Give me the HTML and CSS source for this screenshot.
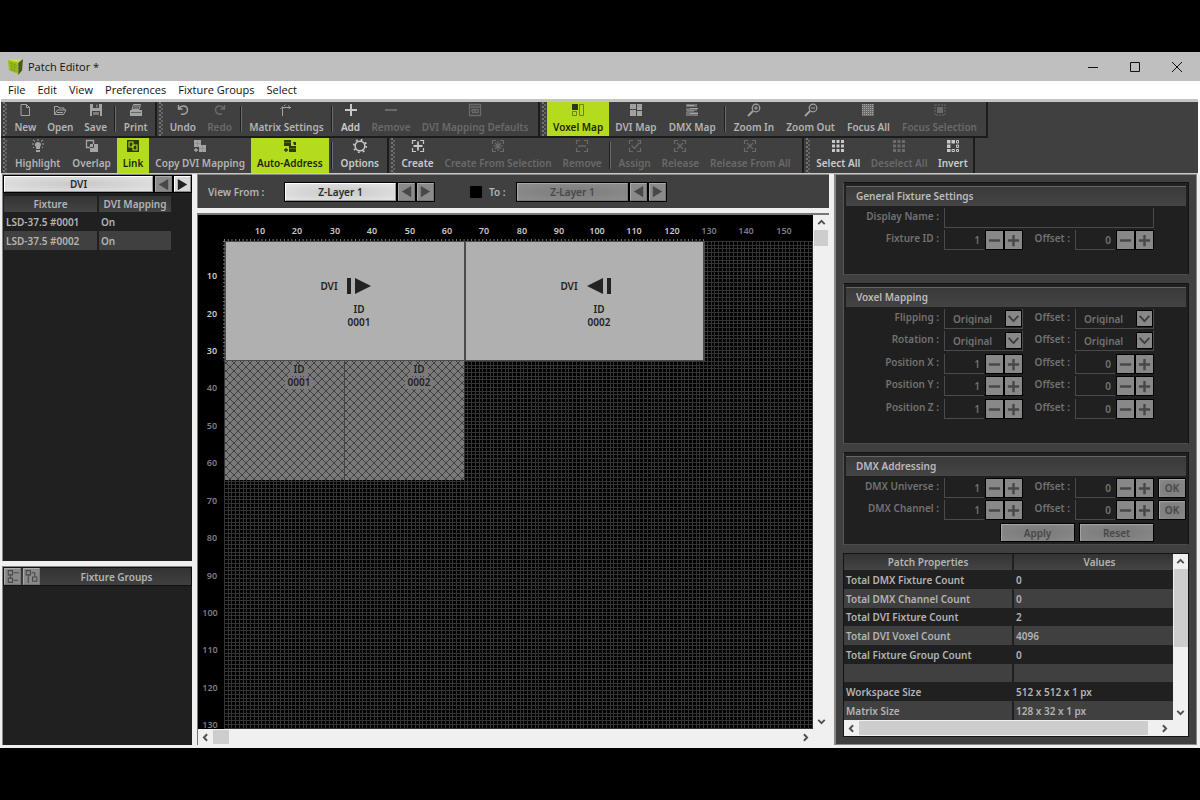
FILE: index.html
```html
<!DOCTYPE html>
<html lang="en">
<head>
<meta charset="utf-8">
<title>Patch Editor</title>
<link rel="stylesheet" href="styles.css">
</head>
<body>
<svg class="defs" aria-hidden="true">
  <defs>
    <symbol id="i-new" viewBox="0 0 14 14"><path d="M3 1.5h5.5l3 3v8H3z M8.5 1.5v3h3" fill="none" stroke="currentColor"/></symbol>
    <symbol id="i-open" viewBox="0 0 14 14"><path d="M1.5 11.5v-8h3.5l1 1.5h5v2M1.5 11.5l3-4.5h8.500l-2.500 4.500z M4 9.500h6" fill="none" stroke="currentColor"/></symbol>
    <symbol id="i-save" viewBox="0 0 14 14"><path d="M1 1h12v12H1z M4 1v4h6V1z M3 8v5h8V8z" fill="currentColor" fill-rule="evenodd"/><path d="M7 1.500h1.500v3H7z M4 9h6v3H4z" fill="currentColor" opacity=".6"/></symbol>
    <symbol id="i-print" viewBox="0 0 14 14"><path d="M4.500 1.500h7l-1.500 5H3z" fill="none" stroke="currentColor"/><path d="M5 3h5M4.500 5h5" stroke="currentColor"/><path d="M1 7h12v6H1z" fill="currentColor"/><path d="M2 9.500h10" stroke="#666"/></symbol>
    <symbol id="i-undo" viewBox="0 0 14 14"><path d="M2.500 2v4h4M3 5.500C5 2 11 2 11.500 6.500C12 10 8.500 12 5 11" fill="none" stroke="currentColor" stroke-width="1.400"/></symbol>
    <symbol id="i-redo" viewBox="0 0 14 14"><path d="M11.500 2v4h-4M11 5.500C9 2 3 2 2.500 6.500C2 10 5.500 12 9 11" fill="none" stroke="currentColor" stroke-width="1.400"/></symbol>
    <symbol id="i-matrix" viewBox="0 0 14 14"><path d="M3.500 13V4.500H12" fill="none" stroke="currentColor"/><path d="M1.500 6l2-2.500 2 2.500M9 2.500l2.500 2-2.500 2M5 3l2-2" fill="none" stroke="currentColor" stroke-dasharray="2 1"/></symbol>
    <symbol id="i-add" viewBox="0 0 14 14"><path d="M7 1v12M1 7h12" stroke="currentColor" stroke-width="2"/></symbol>
    <symbol id="i-remove" viewBox="0 0 14 14"><path d="M1 7h12" stroke="currentColor" stroke-width="2"/></symbol>
    <symbol id="i-defaults" viewBox="0 0 14 14"><path d="M1.500 1.500h11v11h-11z M1.500 4h11M4 9.500h6v-3h-6V9M4 8l2-2M7 6.500v3" fill="none" stroke="currentColor" stroke-width="1.300"/></symbol>
    <symbol id="i-voxel" viewBox="0 0 14 14"><path d="M1 1h6v6H1z" fill="currentColor"/><path d="M8.500 1.500h4v11h-4z M1.500 8.500h4v4h-4z" fill="none" stroke="#6c8412"/></symbol>
    <symbol id="i-dvi" viewBox="0 0 14 14"><path d="M1 1h6v5H1z M1 7h6v6H1z M8 1h5v6H8z M8 8h5v5H8z" fill="currentColor"/><path d="M4 1v12M8 3h5" stroke="#8a8a8a" stroke-width=".6"/></symbol>
    <symbol id="i-dmx" viewBox="0 0 14 14"><path d="M1 1h11v3H1z M1 5h11v3H1z M1 9h12v4H1z" fill="currentColor" opacity=".5"/><path d="M2 2.500h7M5 5.500h8M2 8h7M5 10.500h8" stroke="currentColor"/></symbol>
    <symbol id="i-zoomin" viewBox="0 0 14 14"><circle cx="9" cy="5" r="3.800" fill="none" stroke="currentColor" stroke-width="1.200"/><path d="M9 3v4M7 5h4" stroke="currentColor"/><path d="M6 8l-5 5" stroke="currentColor" stroke-width="1.800"/></symbol>
    <symbol id="i-zoomout" viewBox="0 0 14 14"><circle cx="9" cy="5" r="3.800" fill="none" stroke="currentColor" stroke-width="1.200"/><path d="M7 5h4" stroke="currentColor"/><path d="M6 8l-5 5" stroke="currentColor" stroke-width="1.800"/></symbol>
    <symbol id="i-focusall" viewBox="0 0 14 14"><path d="M1 1h12v12H1z" fill="currentColor" opacity=".45"/><path d="M1.500 1v12M3.500 1v12M5.500 1v12M7.500 1v12M9.500 1v12M11.500 1v12" stroke="currentColor" stroke-dasharray="1 1"/></symbol>
    <symbol id="i-focussel" viewBox="0 0 14 14"><path d="M4 4h6v6H4z" fill="currentColor"/><path d="M2 2h10v10H2z" fill="none" stroke="currentColor" stroke-dasharray="2 1"/></symbol>
    <symbol id="i-highlight" viewBox="0 0 14 14"><path d="M5 10V8C3 6 4 3 7 3s4 3 2 5v2z M5 11h4v2H5z" fill="currentColor"/><path d="M7 0v2M1 5h2M11 5h2M2 1l2 1.500M12 1l-2 1.500M2 9l1-1M12 9l-1-1" stroke="currentColor"/></symbol>
    <symbol id="i-overlap" viewBox="0 0 14 14"><path d="M1.500 1.500h7v7h-7z" fill="none" stroke="currentColor" stroke-width="1.300"/><path d="M5 5h8v8H5z" fill="currentColor"/><path d="M5 8.500h3.500V5" fill="none" stroke="#444"/></symbol>
    <symbol id="i-link" viewBox="0 0 14 14"><path d="M1 1h12v12H1z" fill="currentColor"/><path d="M3 3h4v5H3z M7 6h4v5H7z M5 8l4-2" fill="none" stroke="#b4dc1e" stroke-width="1.100"/></symbol>
    <symbol id="i-copy" viewBox="0 0 14 14"><path d="M1 1h7v7H1z M6 6h7v7H6z" fill="currentColor"/><path d="M1 4.500h7M4.500 1v6M6 9.500h7M9.500 6v7" stroke="#888" stroke-width=".6"/><path d="M3 9v4M1 11h4" stroke="currentColor" stroke-width="1.300"/></symbol>
    <symbol id="i-auto" viewBox="0 0 14 14"><path d="M1 1h7v6H1z M6 7h7v6H6z M10 3h3v3h-2z" fill="currentColor"/><path d="M1 3.500h7M6 9.500h7" stroke="#6c8412" stroke-width=".7"/><path d="M3 9v4M1 11h4" stroke="currentColor" stroke-width="1.300"/></symbol>
    <symbol id="i-options" viewBox="0 0 14 14"><circle cx="7" cy="7" r="4.800" fill="none" stroke="currentColor" stroke-width="1.500"/><circle cx="7" cy="7" r="6.300" fill="none" stroke="currentColor" stroke-width="1.800" stroke-dasharray="1.800 3.150"/></symbol>
    <symbol id="i-corners" viewBox="0 0 14 14"><path d="M1.500 5V1.500H5M9 1.500h3.500V5M12.500 9v3.500H9M5 12.500H1.500V9" fill="none" stroke="currentColor" stroke-width="1.200"/></symbol>
    <symbol id="i-create" viewBox="0 0 14 14"><use href="#i-corners"/><path d="M7 2.500v9M2.500 7h9" stroke="currentColor" stroke-width="1.800"/></symbol>
    <symbol id="i-createsel" viewBox="0 0 14 14"><use href="#i-corners"/><path d="M7 2v10M2 7h10M4 4l6 6M10 4l-6 6" stroke="currentColor" stroke-width="1.200"/></symbol>
    <symbol id="i-removesel" viewBox="0 0 14 14"><use href="#i-corners"/><path d="M3 7h8" stroke="currentColor" stroke-width="1.400"/></symbol>
    <symbol id="i-assign" viewBox="0 0 14 14"><use href="#i-corners"/><path d="M3.500 6.500l3 3 5-6" fill="none" stroke="currentColor" stroke-width="1.300"/></symbol>
    <symbol id="i-release" viewBox="0 0 14 14"><use href="#i-corners"/><path d="M4 4l6 6M10 4l-6 6" stroke="currentColor" stroke-width="1.200"/></symbol>
    <symbol id="i-selall" viewBox="0 0 14 14"><path d="M1 1h3v3H1zM5.500 1h3v3h-3zM10 1h3v3h-3zM1 5.500h3v3H1zM5.500 5.500h3v3h-3zM10 5.500h3v3h-3zM1 10h3v3H1zM5.500 10h3v3h-3zM10 10h3v3h-3z" fill="currentColor"/></symbol>
    <symbol id="i-invert" viewBox="0 0 14 14"><path d="M1 1h3.500v3.500H1zM5.500 1H9v3.500H5.500zM1 5.500h3.500V9H1zM1 10h3.500v3H1z" fill="currentColor"/><path d="M10.500 1.500h2v2.500h-2zM10.500 6h2v2.500h-2zM6 10.500h2.500v2H6zM10.500 10.500h2v2h-2z" fill="none" stroke="currentColor"/></symbol>
    <symbol id="s-prev" viewBox="0 0 16 16"><path d="M13 2v12L3 8z" fill="currentColor"/></symbol>
    <symbol id="s-next" viewBox="0 0 16 16"><path d="M3 2v12l10-6z" fill="currentColor"/></symbol>
    <symbol id="s-minus" viewBox="0 0 16 16"><path d="M2 8h12" stroke="currentColor" stroke-width="2.600"/></symbol>
    <symbol id="s-plus" viewBox="0 0 16 16"><path d="M2 8h12M8 2v12" stroke="currentColor" stroke-width="2.600"/></symbol>
    <symbol id="s-check" viewBox="0 0 14 14"><path d="M2.500 4.500l4.500 5 4.500-5" fill="none" stroke="currentColor" stroke-width="1.800"/></symbol>
    <symbol id="c-up" viewBox="0 0 14 14"><path d="M4 8.500L7 5.500l3 3" fill="none" stroke="#505050" stroke-width="1.800"/></symbol>
    <symbol id="c-down" viewBox="0 0 14 14"><path d="M4 5.500l3 3 3-3" fill="none" stroke="#505050" stroke-width="1.800"/></symbol>
    <symbol id="c-left" viewBox="0 0 14 14"><path d="M8.500 4l-3 3 3 3" fill="none" stroke="#505050" stroke-width="1.800"/></symbol>
    <symbol id="c-right" viewBox="0 0 14 14"><path d="M5.500 4l3 3-3 3" fill="none" stroke="#505050" stroke-width="1.800"/></symbol>
    <pattern id="hatch" width="8" height="8" patternUnits="userSpaceOnUse"><path d="M-1 -1l10 10M9 -1l-10 10" stroke="#3a3a3a" stroke-width=".9"/></pattern>
  </defs>
</svg>

<div class="window">
  <header class="titlebar">
    <svg class="app-icon" viewBox="0 0 16 18" aria-hidden="true"><path d="M0 2l6-1 10 0-5 4z" fill="#c4dc50"/><path d="M0 2l11 3v12L1 13z" fill="#9cc01c"/><path d="M11 5l5-4-1 12-4 5z" fill="#4c5c10"/><path d="M1 5l9 3M1.500 8l8.500 3M1.500 11l8.500 3M4 4v10M7 5v10" stroke="#7a9614" stroke-width=".6"/></svg>
    <span class="app-title">Patch Editor *</span>
    <button class="win-btn" aria-label="Minimize"><svg viewBox="0 0 12 12"><path d="M1 6.500h10" stroke="#111"/></svg></button>
    <button class="win-btn" aria-label="Maximize"><svg viewBox="0 0 12 12"><path d="M1.500 1.500h9v9h-9z" fill="none" stroke="#111"/></svg></button>
    <button class="win-btn" aria-label="Close"><svg viewBox="0 0 12 12"><path d="M1 1l10 10M11 1L1 11" stroke="#111"/></svg></button>
  </header>
  <nav class="menubar">
    <button>File</button><button>Edit</button><button>View</button><button>Preferences</button><button>Fixture Groups</button><button>Select</button>
  </nav>

  <div class="toolbars">
    <div class="toolrow">
      <div class="tools t-file">
        <button class="tool"><svg><use href="#i-new"/></svg>New</button>
        <button class="tool"><svg><use href="#i-open"/></svg>Open</button>
        <button class="tool"><svg><use href="#i-save"/></svg>Save</button>
        <i class="sep"></i>
        <button class="tool"><svg><use href="#i-print"/></svg>Print</button>
      </div>
      <div class="tools t-edit">
        <button class="tool"><svg><use href="#i-undo"/></svg>Undo</button>
        <button class="tool" disabled><svg><use href="#i-redo"/></svg>Redo</button>
        <i class="sep"></i>
        <button class="tool"><svg><use href="#i-matrix"/></svg>Matrix Settings</button>
        <i class="sep"></i>
        <button class="tool bright"><svg><use href="#i-add"/></svg>Add</button>
        <button class="tool" disabled><svg><use href="#i-remove"/></svg>Remove</button>
        <button class="tool" disabled><svg><use href="#i-defaults"/></svg>DVI Mapping Defaults</button>
      </div>
      <div class="tools t-view">
        <button class="tool on"><svg><use href="#i-voxel"/></svg>Voxel Map</button>
        <button class="tool"><svg><use href="#i-dvi"/></svg>DVI Map</button>
        <button class="tool"><svg><use href="#i-dmx"/></svg>DMX Map</button>
        <i class="sep"></i>
        <button class="tool"><svg><use href="#i-zoomin"/></svg>Zoom In</button>
        <button class="tool"><svg><use href="#i-zoomout"/></svg>Zoom Out</button>
        <button class="tool"><svg><use href="#i-focusall"/></svg>Focus All</button>
        <button class="tool" disabled><svg><use href="#i-focussel"/></svg>Focus Selection</button>
      </div>
    </div>
    <div class="toolrow">
      <div class="tools t-map">
        <button class="tool"><svg><use href="#i-highlight"/></svg>Highlight</button>
        <button class="tool"><svg><use href="#i-overlap"/></svg>Overlap</button>
        <button class="tool on"><svg><use href="#i-link"/></svg>Link</button>
        <button class="tool"><svg><use href="#i-copy"/></svg>Copy DVI Mapping</button>
        <button class="tool on"><svg><use href="#i-auto"/></svg>Auto-Address</button>
        <i class="sep"></i>
        <button class="tool bright"><svg><use href="#i-options"/></svg>Options</button>
      </div>
      <div class="tools t-group">
        <button class="tool bright"><svg><use href="#i-create"/></svg>Create</button>
        <button class="tool" disabled><svg><use href="#i-createsel"/></svg>Create From Selection</button>
        <button class="tool" disabled><svg><use href="#i-removesel"/></svg>Remove</button>
        <i class="sep"></i>
        <button class="tool" disabled><svg><use href="#i-assign"/></svg>Assign</button>
        <button class="tool" disabled><svg><use href="#i-release"/></svg>Release</button>
        <button class="tool" disabled><svg><use href="#i-release"/></svg>Release From All</button>
      </div>
      <div class="tools t-select">
        <button class="tool bright"><svg><use href="#i-selall"/></svg>Select All</button>
        <button class="tool" disabled><svg><use href="#i-selall"/></svg>Deselect All</button>
        <button class="tool bright"><svg><use href="#i-invert"/></svg>Invert</button>
      </div>
    </div>
  </div>

  <main class="workarea">
    <aside class="left">
      <section class="panel fixtures">
        <div class="stepper">
          <button class="face">DVI</button>
          <button class="step dim" aria-label="Previous type"><svg><use href="#s-prev"/></svg></button>
          <button class="step lit" aria-label="Next type"><svg><use href="#s-next"/></svg></button>
        </div>
        <table class="grid fixture-table">
          <thead><tr><th class="c-fix">Fixture</th><th>DVI Mapping</th></tr></thead>
          <tbody><tr><td>LSD-37.5 #0001</td><td>On</td></tr><tr><td>LSD-37.5 #0002</td><td>On</td></tr></tbody>
        </table>
      </section>
      <section class="panel groups">
        <div class="group-head">
          <button class="step dim" aria-label="Expand all"><svg viewBox="0 0 14 14"><path d="M3 1.500h4v4H3zM3 8.500h4v4H3zM8 3.500h5M8 10.500h4M5 6v2" fill="none" stroke="currentColor"/></svg></button>
          <button class="step dim" aria-label="Collapse all"><svg viewBox="0 0 14 14"><path d="M2 1.500h4v4H2zM8 7.500h4v4H8zM4 6v7M7 3.500h3v4" fill="none" stroke="currentColor"/></svg></button>
          <h2>Fixture Groups</h2>
        </div>
      </section>
    </aside>

    <div class="center">
      <div class="viewbar">
        <span class="lbl">View From :</span>
        <div class="stepper">
          <button class="face">Z-Layer 1</button>
          <button class="step dim" aria-label="Previous layer"><svg><use href="#s-prev"/></svg></button>
          <button class="step dim" aria-label="Next layer"><svg><use href="#s-next"/></svg></button>
        </div>
        <label class="to"><input type="checkbox">To :</label>
        <div class="stepper off">
          <button class="face">Z-Layer 1</button>
          <button class="step dim" aria-label="Previous end layer"><svg><use href="#s-prev"/></svg></button>
          <button class="step dim" aria-label="Next end layer"><svg><use href="#s-next"/></svg></button>
        </div>
      </div>
      <div class="canvas-wrap">
        <svg class="canvas" role="img" aria-label="Voxel map">
          <g class="lines">
            <path d="M26 1026H3026" stroke-width="2000" stroke-dasharray="1 2.743"/>
            <path d="M1526 26V3026" stroke-width="3000" stroke-dasharray="1 2.743"/>
          </g>
          <path d="M26 25H506" stroke="#777" stroke-width="2" stroke-dasharray="1 2.743"/>
          <path d="M26 26V146" stroke="#777" stroke-width="2" stroke-dasharray="1 2.743"/>
          <g class="ruler hot">
            <text x="62" y="19">10</text><text x="99" y="19">20</text><text x="137" y="19">30</text><text x="174" y="19">40</text><text x="212" y="19">50</text><text x="249" y="19">60</text><text x="286" y="19">70</text><text x="324" y="19">80</text><text x="361" y="19">90</text><text x="399" y="19">100</text><text x="436" y="19">110</text><text x="474" y="19">120</text>
            <text x="14" y="64">10</text><text x="14" y="102">20</text><text x="14" y="139">30</text>
          </g>
          <g class="ruler">
            <text x="511" y="19">130</text><text x="548" y="19">140</text><text x="586" y="19">150</text>
            <text x="14" y="176">40</text><text x="14" y="214">50</text><text x="14" y="251">60</text><text x="14" y="289">70</text><text x="14" y="326">80</text><text x="14" y="364">90</text><text x="12" y="401">100</text><text x="12" y="438">110</text><text x="12" y="476">120</text><text x="12" y="513">130</text>
          </g>
          <rect x="27" y="26" width="480" height="120" fill="#4c4c4c"/>
          <rect x="28" y="27" width="238" height="118" fill="#b0b0b0"/>
          <rect x="268" y="27" width="237" height="118" fill="#b0b0b0"/>
          <rect x="27" y="146" width="239" height="119" fill="#7a7a7a"/>
          <rect x="27" y="146" width="239" height="119" fill="url(#hatch)"/>
          <rect x="146" y="146" width="1" height="119" fill="#444"/>
          <path d="M149 63h4v16h-4zM157 63v16l16-8z M409 63h4v16h-4zM405 63v16l-16-8z" fill="#222"/>
          <g class="chips">
            <rect x="92" y="150" width="18" height="11" rx="3"/><rect x="87" y="162" width="28" height="12" rx="3"/>
            <rect x="212" y="150" width="18" height="11" rx="3"/><rect x="207" y="162" width="28" height="12" rx="3"/>
          </g>
          <g class="marks">
            <text x="131" y="75">DVI</text><text x="161" y="98">ID</text><text x="161" y="111">0001</text>
            <text x="371" y="75">DVI</text><text x="401" y="98">ID</text><text x="401" y="111">0002</text>
            <text x="101" y="158">ID</text><text x="101" y="171">0001</text>
            <text x="221" y="158">ID</text><text x="221" y="171">0002</text>
          </g>
        </svg>
        <div class="vbar"><svg><use href="#c-up"/></svg><i class="thumb short"></i><b></b><svg><use href="#c-down"/></svg></div>
        <div class="hbar"><svg><use href="#c-left"/></svg><i class="thumb short"></i><b></b><svg><use href="#c-right"/></svg></div>
      </div>
    </div>

    <aside class="right">
      <section class="group g-general">
        <h2>General Fixture Settings</h2>
        <div class="form">
          <label class="name" for="dn">Display Name :</label><input class="wide" id="dn" type="text">
          <label class="name" for="fid">Fixture ID :</label><span class="spin"><input id="fid" value="1"><button aria-label="Decrease"><svg><use href="#s-minus"/></svg></button><button aria-label="Increase"><svg><use href="#s-plus"/></svg></button></span>
          <label for="fido">Offset :</label><span class="spin"><input id="fido" value="0"><button aria-label="Decrease"><svg><use href="#s-minus"/></svg></button><button aria-label="Increase"><svg><use href="#s-plus"/></svg></button></span>
        </div>
      </section>
      <section class="group g-voxel">
        <h2>Voxel Mapping</h2>
        <div class="form">
          <label class="name" for="fl">Flipping :</label><span class="combo"><select id="fl"><option>Original</option></select><svg><use href="#s-check"/></svg></span>
          <label for="flo">Offset :</label><span class="combo"><select id="flo"><option>Original</option></select><svg><use href="#s-check"/></svg></span>
          <label class="name" for="ro">Rotation :</label><span class="combo"><select id="ro"><option>Original</option></select><svg><use href="#s-check"/></svg></span>
          <label for="roo">Offset :</label><span class="combo"><select id="roo"><option>Original</option></select><svg><use href="#s-check"/></svg></span>
          <label class="name" for="px">Position X :</label><span class="spin"><input id="px" value="1"><button aria-label="Decrease"><svg><use href="#s-minus"/></svg></button><button aria-label="Increase"><svg><use href="#s-plus"/></svg></button></span>
          <label for="pxo">Offset :</label><span class="spin"><input id="pxo" value="0"><button aria-label="Decrease"><svg><use href="#s-minus"/></svg></button><button aria-label="Increase"><svg><use href="#s-plus"/></svg></button></span>
          <label class="name" for="py">Position Y :</label><span class="spin"><input id="py" value="1"><button aria-label="Decrease"><svg><use href="#s-minus"/></svg></button><button aria-label="Increase"><svg><use href="#s-plus"/></svg></button></span>
          <label for="pyo">Offset :</label><span class="spin"><input id="pyo" value="0"><button aria-label="Decrease"><svg><use href="#s-minus"/></svg></button><button aria-label="Increase"><svg><use href="#s-plus"/></svg></button></span>
          <label class="name" for="pz">Position Z :</label><span class="spin"><input id="pz" value="1"><button aria-label="Decrease"><svg><use href="#s-minus"/></svg></button><button aria-label="Increase"><svg><use href="#s-plus"/></svg></button></span>
          <label for="pzo">Offset :</label><span class="spin"><input id="pzo" value="0"><button aria-label="Decrease"><svg><use href="#s-minus"/></svg></button><button aria-label="Increase"><svg><use href="#s-plus"/></svg></button></span>
        </div>
      </section>
      <section class="group g-dmx">
        <h2>DMX Addressing</h2>
        <div class="form">
          <label class="name" for="du">DMX Universe :</label><span class="spin"><input id="du" value="1"><button aria-label="Decrease"><svg><use href="#s-minus"/></svg></button><button aria-label="Increase"><svg><use href="#s-plus"/></svg></button></span>
          <label for="duo">Offset :</label><span class="spin"><input id="duo" value="0"><button aria-label="Decrease"><svg><use href="#s-minus"/></svg></button><button aria-label="Increase"><svg><use href="#s-plus"/></svg></button></span>
          <button class="btn ok">OK</button>
          <label class="name" for="dc">DMX Channel :</label><span class="spin"><input id="dc" value="1"><button aria-label="Decrease"><svg><use href="#s-minus"/></svg></button><button aria-label="Increase"><svg><use href="#s-plus"/></svg></button></span>
          <label for="dco">Offset :</label><span class="spin"><input id="dco" value="0"><button aria-label="Decrease"><svg><use href="#s-minus"/></svg></button><button aria-label="Increase"><svg><use href="#s-plus"/></svg></button></span>
          <button class="btn ok">OK</button>
          <div class="actions"><button class="btn">Apply</button><button class="btn">Reset</button></div>
        </div>
      </section>
      <section class="props">
        <div class="props-view">
          <table class="grid props-table">
            <thead><tr><th class="c-prop">Patch Properties</th><th>Values</th></tr></thead>
            <tbody>
              <tr><td>Total DMX Fixture Count</td><td>0</td></tr>
              <tr><td>Total DMX Channel Count</td><td>0</td></tr>
              <tr><td>Total DVI Fixture Count</td><td>2</td></tr>
              <tr><td>Total DVI Voxel Count</td><td>4096</td></tr>
              <tr><td>Total Fixture Group Count</td><td>0</td></tr>
              <tr><td></td><td></td></tr>
              <tr><td>Workspace Size</td><td>512 x 512 x 1 px</td></tr>
              <tr><td>Matrix Size</td><td>128 x 32 x 1 px</td></tr>
            </tbody>
          </table>
        </div>
        <div class="vbar"><svg><use href="#c-up"/></svg><i class="thumb half"></i><b></b><svg><use href="#c-down"/></svg></div>
        <div class="hbar"><svg><use href="#c-left"/></svg><i class="thumb long"></i><b></b><svg><use href="#c-right"/></svg></div>
      </section>
    </aside>
  </main>
</div>
</body>
</html>
```
FILE: styles.css
```css
* { box-sizing: border-box; }
html { height: 100%; }
body {
  margin: 0;
  min-height: 100%;
  padding: 52px 0;
  display: flex;
  background: #000;
  color: #b4b4b4;
  font: 600 10px/12px "Noto Sans", sans-serif;
}
button, input, select { font: inherit; color: inherit; margin: 0; padding: 0; border: 0; background: none; border-radius: 0; }
h2 { font: inherit; margin: 0; }
.defs { position: absolute; width: 0; height: 0; }

.window { flex: 1; min-width: 0; display: flex; flex-direction: column; background: #fff; }
.titlebar { display: flex; align-items: center; height: 29px; background: #bfbfbf; padding: 0 2px 0 8px; }
.app-icon { width: 15px; height: 17px; margin-right: 5px; }
.app-title { flex: 1; font: 400 11px/16px "Open Sans", sans-serif; color: #111; }
.win-btn { width: 42px; height: 28px; display: grid; place-items: center; }
.win-btn svg { width: 12px; height: 12px; }
.menubar { display: flex; height: 18px; padding-left: 2px; background: #fff; }
.menubar button { font: 400 11px/18px "Open Sans", sans-serif; color: #111; padding: 0 6px; }

.toolbars { background: #404040; border-top: 3px solid #c4c4c4; border-bottom: 1px solid #c8c8c8; margin: 0 2px 0 1px; }
.toolrow { display: flex; height: 36px; }
.toolrow + .toolrow { height: 35px; }
.tools { display: flex; align-items: stretch; padding: 0 6px 0 8px; border-right: 2px solid #1c1c1c; border-bottom: 2px solid #1c1c1c;
  background: radial-gradient(circle at 1px 1px, #747474 0 1px, transparent 1px) 2px 0 / 4px 4px repeat-y,
    radial-gradient(circle at 1px 1px, #646464 0 1px, transparent 1px) 4px 2px / 4px 4px repeat-y; }
.toolrow + .toolrow .tools { border-bottom: 0; }
.t-file { width: 156px; padding-right: 2px; }
.t-edit { width: 383px; padding: 0 4px 0 7px; }
.t-view { width: 448px; padding: 0 3px 0 7px; }
.t-map { width: 388px; padding-right: 2px; }
.t-group { width: 415px; padding: 0 6px 0 7px; }
.t-select { width: 171px; padding: 0 0 0 7px; }
.tool { flex: 1 1 auto; display: flex; flex-direction: column; align-items: center; gap: 4px; padding: 1px 0 2px; white-space: nowrap; }
.tool svg { width: 14px; height: 14px; color: #a4a4a4; }
.tool:disabled, .tool:disabled svg { color: #6a6a6a; }
.tool.bright svg { color: #c8c8c8; }
.tool.bright { color: #ccc; }
.tool.on { background: #b4dc1e; color: #1e2606; }
.tool.on svg { color: #2e3a0a; }
.sep { flex: none; width: 2px; margin: 4px 2px; background: linear-gradient(90deg, #1e1e1e 50%, #6c6c6c 50%); }

.workarea { flex: 1; display: grid; grid-template-columns: 190px minmax(0, 1fr) 363px; gap: 5px; padding: 0 3px 3px 2px; background: #f0f0f0; }
.left { display: grid; grid-template-rows: 1fr 179px; gap: 5px; }
.panel { background: #202020; border-left: 1px solid #888; border-top: 1px solid #888; }
.stepper { display: flex; height: 18px; background: #000; padding: 1px; gap: 2px; }
.face { flex: 1; color: #2a2a2a; background: radial-gradient(ellipse at center, #c8c8c8, #e4e4e4); border: 1px solid; border-color: #fff #999 #999 #fff; }
.step { flex: none; width: 17px; display: grid; place-items: center; background: #d8d8d8; color: #222; border: 1px solid; border-color: #fff #888 #888 #fff; }
.step.dim { background: #8a8a8a; color: #484848; border-color: #aaa #777 #777 #aaa; }
.step svg { width: 15px; height: 15px; }

.grid { border-collapse: collapse; table-layout: fixed; }
.grid th { font-weight: 600; padding: 0; height: 16px; text-align: center; background: linear-gradient(#333, #444); border-right: 2px solid #202020; }
.grid td { padding: 0 2px; height: 19px; border-right: 2px solid #202020; white-space: nowrap; }
.grid tbody tr:nth-child(even) td { background: #404040; }
.fixture-table { width: 169px; margin: 3px 0 0 1px; }
.c-fix { width: 94px; }

.group-head { display: flex; align-items: center; gap: 2px; height: 19px; background: linear-gradient(#333, #404040); border: 1px solid #111; }
.group-head .step { height: 17px; }
.group-head h2 { flex: 1; text-align: center; }

.center { display: grid; grid-template-rows: 34px minmax(0, 1fr); gap: 5px; min-width: 0; }
.viewbar { display: flex; align-items: center; background: #404040; border-left: 1px solid #888; border-top: 1px solid #888; padding-left: 10px; }
.viewbar .lbl { width: 76px; }
.viewbar .stepper { width: 151px; height: 20px; }
.to { display: flex; align-items: center; gap: 7px; margin: 0 10px 0 35px; width: 36px; white-space: nowrap; }
.to input { appearance: none; width: 12px; height: 12px; background: #000; flex: none; }
.off .face { background: radial-gradient(ellipse at center, #7c7c7c, #8e8e8e); color: #484848; border-color: #aaa #777 #777 #aaa; }

.canvas-wrap { display: grid; grid-template: minmax(0, 1fr) 16px / minmax(0, 1fr) 16px; border-left: 1px solid #777; border-top: 2px solid #777; min-height: 0; }
.canvas { width: 100%; height: 100%; background: #000; display: block; }
.lines { fill: none; stroke: #343434; shape-rendering: crispEdges; }
.ruler text { fill: #7c7c84; font: 600 9px "Noto Sans", sans-serif; text-anchor: middle; }
.ruler.hot text { fill: #c8c8c8; }
.marks text { fill: #222; text-anchor: middle; }
.chips { fill: #7a7a7a; }

.vbar, .hbar { display: flex; background: #f0f0f0; min-height: 0; }
.vbar { flex-direction: column; align-items: center; }
.hbar { align-items: center; padding-right: 16px; grid-column: 1 / -1; }
.vbar svg, .hbar svg { width: 15px; height: 15px; flex: none; }
.vbar b, .hbar b { flex: 1; }
.thumb { background: #cdcdcd; flex: none; }
.vbar .thumb { width: 14px; }
.hbar .thumb { height: 14px; }
.vbar .short { height: 16px; }
.hbar .short { width: 16px; }
.vbar .half { height: 47%; }
.hbar .long { width: 88%; }

.right { background: #404040; border: 1px solid #888; border-width: 1px 1px 1px 2px; padding: 7px 7px 7px; display: flex; flex-direction: column; gap: 8px; }
.group { background: #202020; border: 1px solid #141414; border-left-color: #555; border-bottom-color: #4c4c4c; padding: 3px 2px 0; }
.group h2 { height: 20px; line-height: 18px; padding-left: 10px; background: linear-gradient(#3a3a3a, #444); border-top: 1px solid #666; color: #bbb; }
.g-general { height: 93px; }
.g-voxel { height: 161px; }
.g-dmx { height: 93px; }
.form { display: grid; grid-template-columns: 1fr 79px 52px 79px 32px; grid-auto-rows: 22px 23px; padding-top: 2px; color: #727272; }
.form label { text-align: right; padding: 2px 5px 0 0; white-space: nowrap; }
.form .name { grid-column: 1; }
.form .wide { grid-column: 2 / 5; margin: 0 0 2px; border: 1px solid #4a4a4a; border-top: 0; }
.spin, .combo { display: flex; height: 20px; }
.spin input { flex: 1; min-width: 0; width: 0; text-align: right; padding-right: 4px; margin-right: 1px; border-left: 1px solid #4a4a4a; border-bottom: 1px solid #4a4a4a; }
.spin button { width: 19px; background: #888; border: 1px solid #000; color: #484848; display: grid; place-items: center; }
.spin svg { width: 15px; height: 15px; }
.combo { border: 1px solid #4a4a4a; border-top: 0; align-items: center; padding-right: 1px; }
.combo select { appearance: none; flex: 1; min-width: 0; padding-left: 8px; }
.combo svg { width: 15px; height: 15px; background: #888; color: #404040; outline: 1px solid #000; }
.btn { background: radial-gradient(ellipse at center, #787878, #8a8a8a); color: #484848; border: 1px solid #000; box-shadow: inset 1px 1px #a4a4a4; }
.ok { height: 20px; margin: 0 0 0 4px; }
.actions { grid-column: 2 / 5; display: flex; justify-content: flex-end; gap: 4px; }
.actions .btn { width: 75px; height: 19px; }

.props { flex: 1; display: grid; grid-template: minmax(0, 1fr) 16px / minmax(0, 1fr) 15px; background: #202020; border: 1px solid #141414; min-height: 0; }
.props-view { overflow: hidden; height: 0; min-height: 100%; }
.props-table { width: calc(100% + 14px); color: #b4b4b4; }
.c-prop { width: 169px; }
.props-table tr:nth-child(3n) td { height: 18px; }
```
